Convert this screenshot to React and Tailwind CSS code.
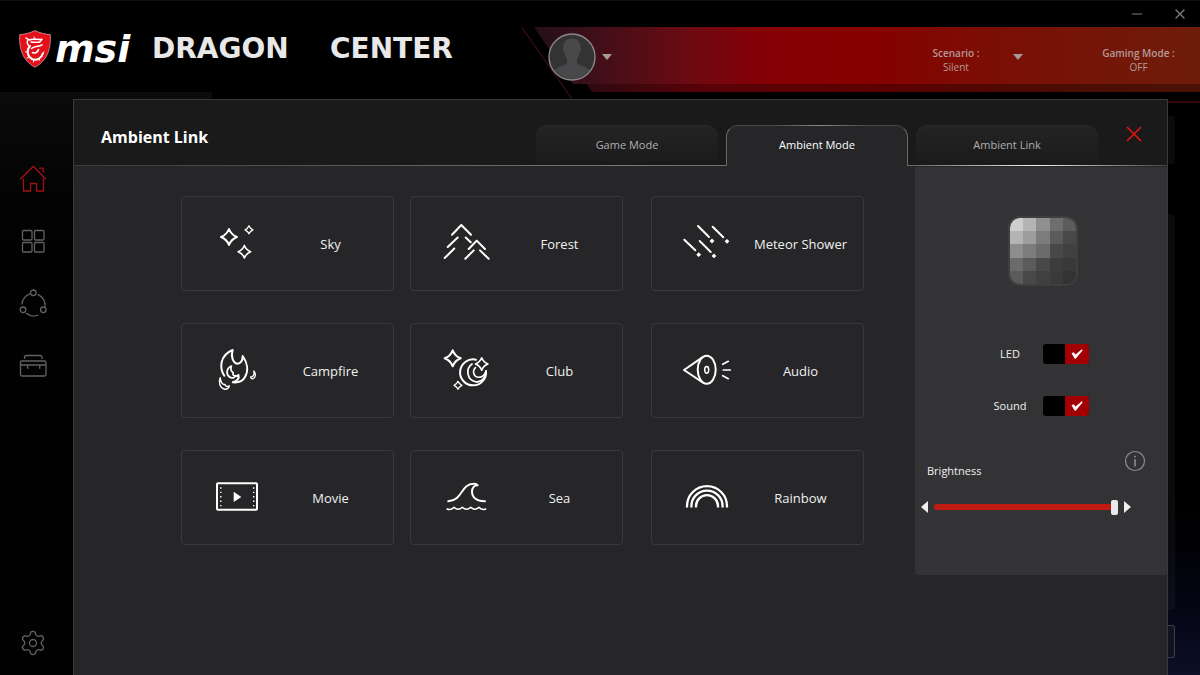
import { useState } from 'react';
import { Minus, Settings, X } from 'lucide-react';

// Four-pointed star used by several of the mode icons
function starPath(cx, cy, r) {
    const c = r * 0.28;
    return `M${cx} ${cy - r}Q${cx + c} ${cy - c} ${cx + r} ${cy}Q${cx + c} ${cy + c} ${cx} ${cy + r}Q${cx - c} ${cy + c} ${cx - r} ${cy}Q${cx - c} ${cy - c} ${cx} ${cy - r}Z`;
}

const modes = [
    {
        name: 'Sky',
        icon: (
            <>
                <path d={starPath(19, 21, 8)} />
                <path d={starPath(34.4, 35.7, 6.2)} strokeWidth="1.7" />
                <path d={starPath(39, 13.8, 4)} strokeWidth="1.3" />
            </>
        ),
    },
    {
        name: 'Forest',
        icon: (
            <>
                <path d="M13 18.7 22.3 9 32 18.7" />
                <path d="M18.7 21.5 8.7 31M15.3 32.5 5.7 42M26.7 21.5l5 4.7" />
                <path d="M29.7 33l8-8.4 8.3 8.4M34.7 34.4l-8.4 8.3M41 34.4l8.7 8.4" />
            </>
        ),
    },
    {
        name: 'Meteor Shower',
        icon: (
            <>
                <path d="M18 10l11 11M32.7 10.7l10.6 10.6M4.3 23.7l11 10.6M19.7 25l11 11" />
                <path
                    d="M32 22.6l2.4 2.4-2.4 2.4-2.4-2.4zM47 22.9l2.4 2.4-2.4 2.4-2.4-2.4zM18.7 36.3l2.4 2.4-2.4 2.4-2.4-2.4zM34 37.5l2.4 2.4-2.4 2.4-2.4-2.4z"
                    fill="currentColor"
                    stroke="none"
                />
            </>
        ),
    },
    {
        name: 'Campfire',
        icon: (
            <>
                <path d="M14.3 32.7C9 25 10 12 22.7 7C20.5 13 23 20 27.3 20.7C31 20.5 32.6 17 32.7 13C37.6 20 38.6 28 35 34C32.8 38 29 40 22.8 39.3C27.5 38 29.5 35.5 28.5 32C27.6 33 26.6 33.2 25.5 33" />
                <path d="M21.5 23C16.5 25 15.5 31 19.5 34C22 35.8 24.7 34.8 25.5 33C23.5 33 22.4 31.5 23.2 29.5C20.8 28.5 20.4 25.5 21.5 23Z" strokeWidth="1.7" />
                <path d="M10.2 34.7C8.5 39 9.5 44.5 14 46C16.5 46.8 19 45.5 19.3 43C17 44 15.5 43.5 15 41.5C12.5 42 10.5 39 10.2 34.7Z" strokeWidth="1.4" />
                <path d="M43.8 28C46 30 46 34 43.5 35.5C42.3 36.2 40.8 35.6 40.5 34C43 34.3 44.5 32 43.8 28Z" strokeWidth="1.3" />
            </>
        ),
    },
    {
        name: 'Club',
        icon: (
            <>
                <path d={starPath(13.7, 15.3, 8)} />
                <path d={starPath(42.7, 21, 6.2)} strokeWidth="1.7" />
                <path d={starPath(19, 42.3, 4)} strokeWidth="1.3" />
                <path d="M37 16.7A13 13 0 1 0 47 28" />
                <path d="M33 21C26.5 25.5 27.5 37.5 37.5 39" strokeWidth="1.7" />
                <path d="M36.5 24.5C33 28 34.5 34.5 40 34.3C43.8 34.2 46 31.5 47 28C47 34.5 43 38.7 37.5 39" strokeWidth="1.6" />
            </>
        ),
    },
    {
        name: 'Audio',
        icon: (
            <>
                <ellipse cx="26.7" cy="26.7" rx="9" ry="14" />
                <ellipse cx="26.7" cy="26.8" rx="2" ry="3.4" strokeWidth="1.5" />
                <path d="M22 14.6 4 27l18 12" />
                <path d="M42.7 21.3l5.6-3M43.3 27h7M42.7 32.7l5.6 3" strokeWidth="1.7" />
            </>
        ),
    },
    {
        name: 'Movie',
        icon: (
            <>
                <rect x="7" y="13.3" width="40" height="26.4" rx="1" />
                <path d="M10.8 17.3V37M43.7 17.3V37" strokeWidth="1.4" strokeDasharray="1.4 3" strokeLinecap="butt" />
                <path d="M23.7 21.7 31.3 26.9 23.7 32z" fill="currentColor" stroke="none" />
            </>
        ),
    },
    {
        name: 'Sea',
        icon: (
            <>
                <path d="M9.3 31.3C24 30 22 14 34.5 13.8C36.5 13.7 38 14.3 38.7 15.3C35.5 14.8 33 18 33 21.5C33 27.5 38 31.5 46 31.3" />
                <path d="M8 39q4 1.5 7-1.7 4 4 8.4 0 4 4 8.4 0 4 4 8.2 0 3 3.2 6.7 1.7" strokeWidth="1.5" />
            </>
        ),
    },
    {
        name: 'Rainbow',
        icon: (
            <g strokeLinecap="butt" strokeWidth="2.3">
                <path d="M7 37.6v-1.4a20 20 0 0 1 40 0v1.4" />
                <path d="M11.4 37.6v-1.4a15.6 15.6 0 0 1 31.2 0v1.4" />
                <path d="M16 37.6v-1.4a11 11 0 0 1 22 0v1.4" />
            </g>
        ),
    },
];

const navItems = [
    {
        name: 'Home',
        icon: <path d="M1.3 14.3 14.3 1.3 27 14.3M4.5 13.5V26H11.5V18.5H17.5V26H24.5V13.5M20 3.2H24V7.7" />,
    },
    {
        name: 'Features',
        icon: (
            <>
                <rect x="3.5" y="3.5" width="9.5" height="9.5" rx="1" />
                <rect x="15.5" y="3.5" width="9.5" height="9.5" rx="1" />
                <rect x="3.5" y="15.5" width="9.5" height="9.5" rx="1" />
                <rect x="15.5" y="15.5" width="9.5" height="9.5" rx="1" />
            </>
        ),
    },
    {
        name: 'Sync',
        icon: (
            <>
                <circle cx="14.3" cy="3.8" r="2.8" />
                <circle cx="4" cy="20.8" r="2.8" />
                <circle cx="24.3" cy="20.8" r="2.8" />
                <path d="M11 4.8A12 12 0 0 0 3 15.5M18.7 5.3A12 12 0 0 1 26 17.5M7 24A12 12 0 0 0 19.5 26" />
            </>
        ),
    },
    {
        name: 'Toolbox',
        icon: (
            <>
                <rect x="1.5" y="10" width="25.5" height="15" rx="1.5" />
                <path d="M5.5 8V6.5Q5.5 4.5 7.5 4.5H21Q23 4.5 23 6.5V8M1.5 14H27M8.7 14.5V17.8M20.7 14.5V17.8" />
            </>
        ),
    },
];

const tabs = ['Game Mode', 'Ambient Mode', 'Ambient Link'];

const swatches = [
    'bg-[#cecece]', 'bg-[#b4b4b4]', 'bg-[#8f8f8f]', 'bg-[#6e6e6e]', 'bg-[#5c5c5c]',
    'bg-[#b4b4b4]', 'bg-[#9d9d9d]', 'bg-[#7c7c7c]', 'bg-[#5b5b5b]', 'bg-[#484849]',
    'bg-[#8d8d8d]', 'bg-[#7c7c7c]', 'bg-[#6b6b6b]', 'bg-[#484849]', 'bg-[#404041]',
    'bg-[#6b6b6b]', 'bg-[#5b5b5b]', 'bg-[#484849]', 'bg-[#3c3c3d]', 'bg-[#39393a]',
    'bg-[#5b5b5b]', 'bg-[#484849]', 'bg-[#404041]', 'bg-[#3a3a3b]', 'bg-[#333334]',
];

function Caret() {
    return (
        <svg viewBox="0 0 10 6" className="h-[6px] w-[10px] shrink-0 fill-[#a89a9c]" aria-hidden="true">
            <path d="M0 0h10L5 6z" />
        </svg>
    );
}

function Logo() {
    return (
        <div className="flex h-full w-[521px] shrink-0 items-center pt-1 pl-[19px]">
            <svg viewBox="0 0 32 38" className="h-[38px] w-8 shrink-0" aria-hidden="true">
                <path
                    d="M16 .6C21 3 26 4.3 31.3 4.6C32 17 29.5 30 16 37.2C2.5 30 0 17 .7 4.6C6 4.3 11 3 16 .6Z"
                    fill="#e3101a"
                    stroke="#c9a0a0"
                    strokeWidth=".8"
                />
                <g fill="none" stroke="#fff" strokeLinecap="round" strokeLinejoin="round">
                    <path d="M7 8l2.6 1.6M9.3 9.8C7 12 8.3 15 11 16.2" strokeWidth="1.5" />
                    <path d="M10 10C14 8 18 10 23 9.2L20.5 12.3C17.5 11.7 14.5 13 12 12" strokeWidth="1.5" />
                    <path d="M11 16.2C7.5 19 8 26.5 13 29C17.5 31 22.5 28.5 23.8 23.5" strokeWidth="2" />
                    <path d="M12.5 18.5C16 15.5 20 17 23 14.8M13.5 22.5C16 24 19 22 19.5 19.5" strokeWidth="1.6" />
                    <path d="M8.5 22.5l-2-.8M10 27l-2 1M15 30l-.6 2M20 29l.8 1.6M23.8 23.5l1.2-1.8M16 9l-1-2" strokeWidth="1" />
                </g>
            </svg>
            <span className="ml-1 w-[97px] font-['DejaVu_Sans',sans-serif] text-[38px] leading-none font-bold text-white italic">
                msi
            </span>
            <h1 className="flex font-['DejaVu_Sans',sans-serif] text-[28px] leading-none font-bold text-[#e8e8e8]">
                <span className="w-[178px]">DRAGON</span>
                <span>CENTER</span>
            </h1>
        </div>
    );
}

function StatusBanner() {
    return (
        <div className="relative flex flex-1 items-start text-[10px] leading-[14px] text-[#b59a98]">
            <div className="absolute inset-y-0 right-0 left-[27px] bg-[linear-gradient(90deg,#1f0a12_0%,#33080f_8%,#5a0207_25%,#5c0000_50%,#4c0b04_75%,#4a1206_100%)] [clip-path:polygon(0_0,100%_0,100%_100%,44px_100%)]" />
            <div className="absolute top-0 right-0 bottom-2 left-[13px] bg-[linear-gradient(90deg,#22101b_0%,#420f18_10%,#6e0a12_24%,#850005_34%,#860000_50%,#7b0e05_68%,#6e1d0a_100%)] [clip-path:polygon(0_0,100%_0,100%_100%,39px_100%)]" />
            <svg viewBox="0 0 52 72" className="absolute top-0 left-0 h-[72px] w-[52px]" aria-hidden="true">
                <path d="M.5 0 51 72" stroke="#3c0d14" strokeWidth="1.2" fill="none" />
            </svg>

            <button type="button" aria-label="Account" className="relative mt-[6px] ml-[27px] flex items-center gap-[6px]">
                <svg viewBox="0 0 48 48" className="h-12 w-12">
                    <circle cx="24" cy="24" r="23" fill="#333334" stroke="#8d8587" strokeWidth="1.4" />
                    <path
                        d="M24 5.5c5.5 0 8.5 3 8.5 8.5 0 1 .8 1.5.5 3.5-.3 1.7-1.2 2-1.5 3-.5 2.5-1.5 4-2.5 5.5v3.5c1.5 3.5 8.5 3 12.3 7.5A22 22 0 0 1 24 46 22 22 0 0 1 6.7 37c3.8-4.5 10.8-4 12.3-7.5V26c-1-1.5-2-3-2.5-5.5-.3-1-1.2-1.3-1.5-3-.3-2 .5-2.5.5-3.5 0-5.5 3-8.5 8.5-8.5z"
                        fill="#48484a"
                    />
                </svg>
                <Caret />
            </button>

            <div className="relative mt-[19px] ml-auto flex gap-[17px]">
                <label className="flex w-20 flex-col items-center">
                    <span className="font-semibold">Scenario :</span>
                    <select className="w-20 appearance-none bg-transparent text-center" defaultValue="Silent">
                        <option>Silent</option>
                        <option>Balanced</option>
                    </select>
                </label>
                <div className="pt-2">
                    <Caret />
                </div>
            </div>
            <button
                type="button"
                className="relative mt-[19px] mr-[25px] ml-[79px] flex w-[73px] flex-col items-center whitespace-nowrap"
            >
                <span className="font-semibold">Gaming Mode :</span>
                <span>OFF</span>
            </button>
        </div>
    );
}

function Toggle({ id, label, checked, onChange }) {
    return (
        <label htmlFor={id} className="flex h-5 items-center">
            <span className="w-[66px] text-center text-[11px]">{label}</span>
            <input id={id} type="checkbox" checked={checked} onChange={onChange} className="peer sr-only" />
            <span className="flex h-5 w-[46px] flex-row-reverse overflow-hidden rounded-[3px] bg-black peer-checked:flex-row peer-checked:justify-end">
                <span className="flex h-5 w-6 items-center justify-center bg-[#a30003]">
                    {checked && (
                        <svg viewBox="0 0 12 10" className="h-[10px] w-3" aria-hidden="true">
                            <path d="M.5 4.2 2.6 3.2 4.6 5.6 10.8.3 11.7 1.2 4.7 9.7 3.6 9.5z" fill="#fff" />
                        </svg>
                    )}
                </span>
            </span>
        </label>
    );
}

function SidePanel() {
    const [led, setLed] = useState(true);
    const [sound, setSound] = useState(true);
    const [brightness, setBrightness] = useState(100);

    return (
        <aside className="mt-px flex h-[408px] w-[252px] shrink-0 flex-col rounded-b-[3px] bg-[#333335] text-[#f0f0f0]">
            <div className="mt-[49px] ml-[93px] grid h-[70px] w-[70px] grid-cols-5 grid-rows-5 overflow-hidden rounded-xl border-2 border-[#3f3f40]">
                {swatches.map((color, i) => (
                    <span key={i} className={color} />
                ))}
            </div>

            <div className="mt-[58px] ml-[62px] flex flex-col gap-8">
                <Toggle id="led" label="LED" checked={led} onChange={() => setLed(!led)} />
                <Toggle id="sound" label="Sound" checked={sound} onChange={() => setSound(!sound)} />
            </div>

            <div className="mt-[34px] flex justify-between pr-[21px] pl-3">
                <label htmlFor="brightness" className="pt-[13px] text-[11px] leading-4">Brightness</label>
                <button type="button" aria-label="Brightness info" className="h-[22px] w-[22px] text-[#8c8c8e]">
                    <svg viewBox="0 0 22 22" className="h-[22px] w-[22px]" fill="none" stroke="currentColor">
                        <circle cx="11" cy="11" r="9.5" strokeWidth="1.2" />
                        <path d="M11 9.3V16.5M11 5.8V7.5" strokeWidth="1.6" />
                    </svg>
                </button>
            </div>

            <div className="mt-[22px] ml-[6px] flex items-center gap-[6px]">
                <button type="button" aria-label="Decrease brightness" onClick={() => setBrightness(Math.max(0, brightness - 5))}>
                    <svg viewBox="0 0 7 12" className="h-3 w-[7px] fill-[#eeeeee]">
                        <path d="M7 0v12L0 6z" />
                    </svg>
                </button>
                <input
                    id="brightness"
                    type="range"
                    value={brightness}
                    onChange={(e) => setBrightness(Number(e.target.value))}
                    className="h-[6px] w-[184px] appearance-none rounded-full bg-[#c11b10] [&::-webkit-slider-thumb]:h-[15px] [&::-webkit-slider-thumb]:w-[7px] [&::-webkit-slider-thumb]:appearance-none [&::-webkit-slider-thumb]:rounded-[2px] [&::-webkit-slider-thumb]:bg-[#e9e9e9]"
                />
                <button type="button" aria-label="Increase brightness" onClick={() => setBrightness(Math.min(100, brightness + 5))}>
                    <svg viewBox="0 0 7 12" className="h-3 w-[7px] fill-[#eeeeee]">
                        <path d="M0 0v12l7-6z" />
                    </svg>
                </button>
            </div>
        </aside>
    );
}

function Tab({ name, active, onClick }) {
    return (
        <button
            type="button"
            role="tab"
            aria-selected={active}
            onClick={onClick}
            className={
                active
                    ? 'relative z-10 h-[41px] w-[182px] rounded-t-xl border border-b-0 border-[#6a6a6b] border-t-[#48484a] bg-[#262628] pb-[2px] text-[11px] text-white'
                    : 'h-[41px] w-[182px] rounded-t-xl border-t border-[#2b2b2b] bg-linear-to-b from-[#242424] to-[#1a1a1a] pb-[2px] text-[11px] text-[#b0b0b0]'
            }
        >
            {active && <span className="absolute -top-px left-12 h-px w-[90px] bg-linear-to-r from-transparent via-[#8a8a8a] to-transparent" />}
            {name}
        </button>
    );
}

function AmbientDialog() {
    const [activeTab, setActiveTab] = useState('Ambient Mode');

    return (
        <section className="relative mt-[7px] flex min-w-0 flex-1 flex-col border border-b-0 border-[#3a3a3b] bg-[#262628]">
            <header className="relative flex h-[66px] items-end bg-[#1a1a1a]">
                <h2 className="self-center pt-2 pl-[27px] text-base font-bold text-white">Ambient Link</h2>
                <div role="tablist" className="ml-auto flex gap-2">
                    {tabs.map((tab) => (
                        <Tab key={tab} name={tab} active={tab === activeTab} onClick={() => setActiveTab(tab)} />
                    ))}
                </div>
                <button type="button" aria-label="Close" className="mr-[17px] mb-4 ml-5 flex h-8 w-8 items-center justify-center text-[#e01414]">
                    <svg viewBox="0 0 16 16" className="h-4 w-4" aria-hidden="true">
                        <path d="M1 1l14 14M15 1 1 15" stroke="currentColor" strokeWidth="1.7" />
                    </svg>
                </button>
                <div className="absolute inset-x-0 bottom-0 h-px bg-[linear-gradient(90deg,#3a3a3b_0%,#777778_50%,#6a6a6b_77%,#f5f5f5_88%,#8a8a8a_95%,#444445_100%)]" />
            </header>

            <div className="flex flex-1 items-start justify-between">
                <div className="grid grid-cols-[229px_241px_213px] gap-y-8 pt-[30px] pl-[107px]">
                    {modes.map((mode) => (
                        <button
                            key={mode.name}
                            type="button"
                            className="flex h-[95px] w-[213px] items-center rounded-[4px] border border-[#3a3a3c] pl-7 text-[13px] text-[#f0f0f0] hover:bg-[#2d2d2f]"
                        >
                            <svg
                                viewBox="0 0 56 55"
                                className="h-[55px] w-14 shrink-0 text-white"
                                fill="none"
                                stroke="currentColor"
                                strokeWidth="2"
                                strokeLinecap="round"
                                strokeLinejoin="round"
                                aria-hidden="true"
                            >
                                {mode.icon}
                            </svg>
                            <span className="flex-1 pt-0.5 pl-0.5 text-center whitespace-nowrap">{mode.name}</span>
                        </button>
                    ))}
                </div>
                <SidePanel />
            </div>
        </section>
    );
}

function App() {
    return (
        <div className="flex min-h-screen flex-col bg-black font-['Open_Sans','Noto_Sans',sans-serif]">
            <header className="flex h-[92px] border-t border-[#0a1016]">
                <Logo />
                <div className="flex flex-1 flex-col">
                    <div className="flex h-[26px] items-center justify-end gap-[27px] pr-3 text-[#7e7e7e]">
                        <button type="button" aria-label="Minimize">
                            <Minus size={16} strokeWidth={1.8} />
                        </button>
                        <button type="button" aria-label="Close window">
                            <X size={16} strokeWidth={1.8} />
                        </button>
                    </div>
                    <StatusBanner />
                </div>
            </header>

            <div className="relative flex flex-1">
                <div className="absolute top-0 left-0 h-full w-[212px] bg-linear-to-b from-[#0b0b0b] to-[#020202] to-25%" />
                <nav className="relative flex w-[73px] shrink-0 flex-col items-start gap-[34px] pt-[73px] pb-[18px] pl-[19px]">
                    {navItems.map((item, i) => (
                        <button
                            key={item.name}
                            type="button"
                            aria-label={item.name}
                            className={i === 0 ? 'text-[#a01216]' : 'text-[#626263]'}
                        >
                            <svg
                                viewBox="0 0 28 28"
                                className="h-7 w-7"
                                fill="none"
                                stroke="currentColor"
                                strokeWidth="1.3"
                                strokeLinejoin="round"
                                aria-hidden="true"
                            >
                                {item.icon}
                            </svg>
                        </button>
                    ))}
                    <button type="button" aria-label="Settings" className="mt-auto text-[#626263]">
                        <Settings size={28} strokeWidth={1.1} />
                    </button>
                </nav>

                <AmbientDialog />

                {/* Edge of the page that stays visible behind the dialog */}
                <div className="flex w-8 shrink-0 flex-col items-start bg-linear-to-b from-black from-60% to-[#0d0f26] pt-[9px]">
                    <div className="h-[2px] w-full bg-[#33090b]" />
                    <div className="mt-[13px] h-12 w-[7px] rounded-r-[3px] bg-[#0b0b0c]" />
                    <div className="mt-[50px] h-[396px] w-[7px] rounded-r-[3px] bg-white/4" />
                    <div className="mt-[15px] h-[33px] w-[7px] rounded-r-[3px] border border-l-0 border-[#3c3d4a] bg-[#12131f]" />
                </div>
            </div>
        </div>
    );
}

export default App;
